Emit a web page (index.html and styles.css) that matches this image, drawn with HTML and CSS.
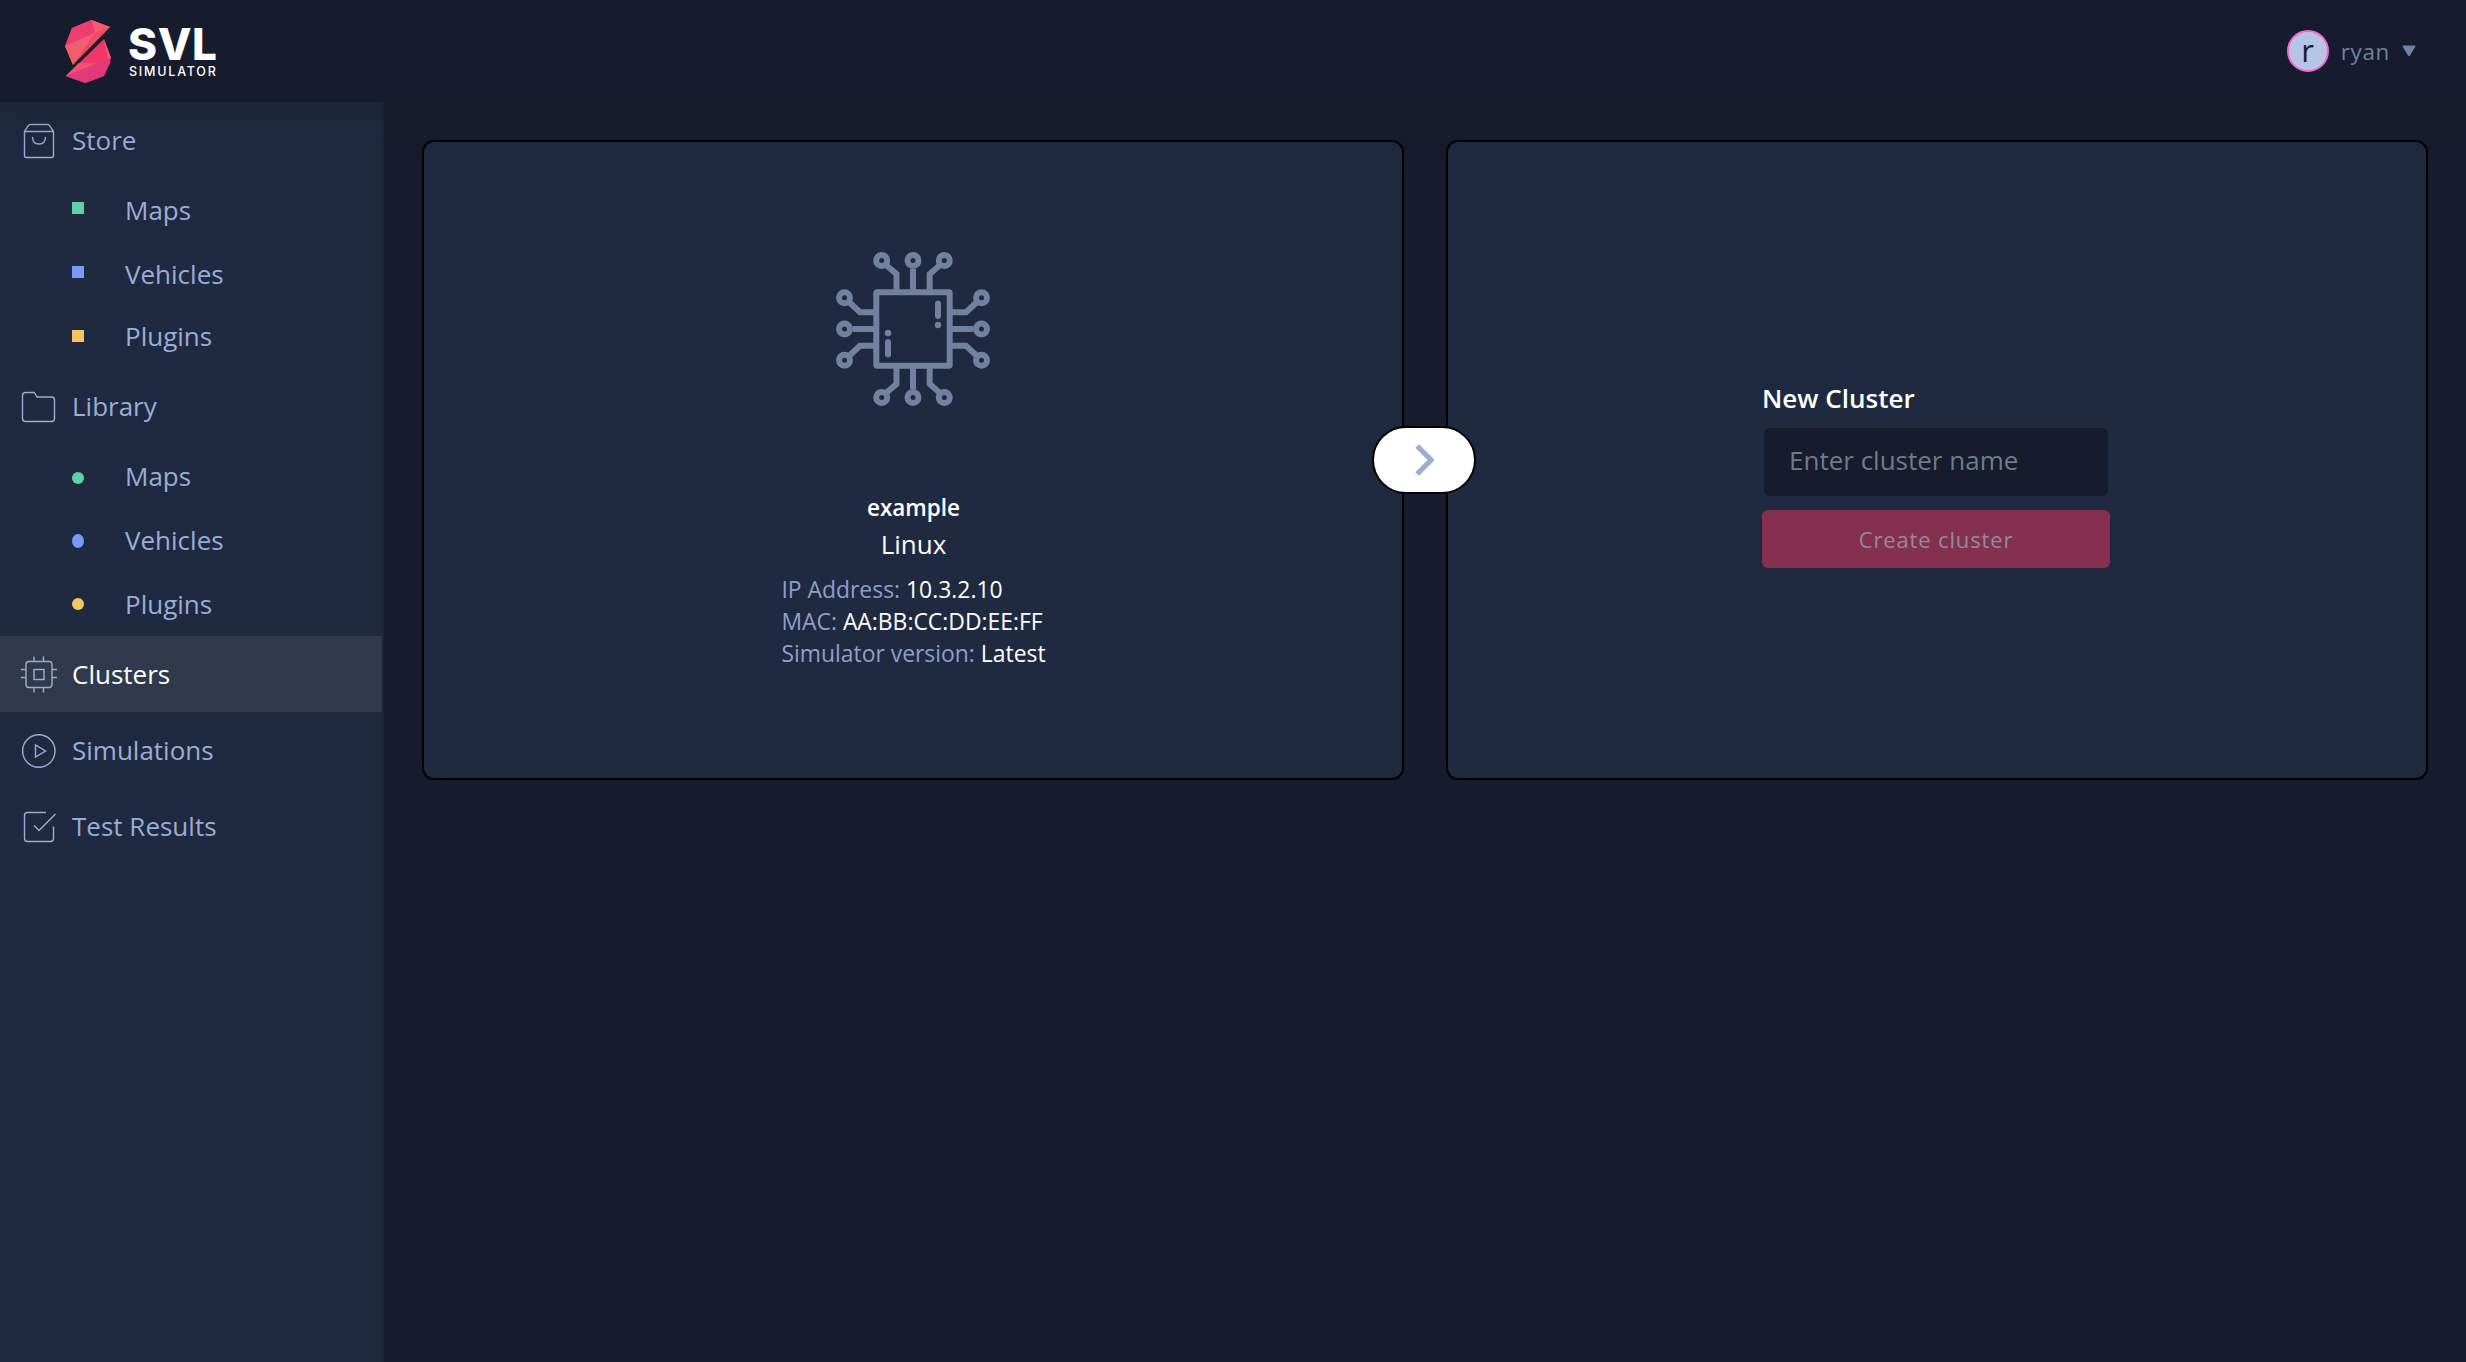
FILE: index.html
```html
<!DOCTYPE html>
<html lang="en">
<head>
<meta charset="utf-8">
<title>Clusters - SVL Simulator</title>
<link rel="stylesheet" href="styles.css">
</head>
<body>
<header class="topbar">
  <a class="brand">
    <svg class="brand-mark" width="48" height="66" viewBox="0 0 48 66">
      <path fill="#f0466c" d="M27.500 1 46 8 9 46 1 27 8 9Z"/>
      <path fill="#f45d6b" d="M27.500 1 46 8 31 14Z"/>
      <path fill="#ee3e6f" d="M27.500 1 31 14 2 26 8 9Z"/>
      <path fill="#f15e6c" d="M1 27 31 14 9 46Z"/>
      <path fill="#f04a6c" d="M31 14 46 8 22 32Z"/>
      <path fill="#ef3866" d="M40 20 47 39 40 57 21 64 2 57Z"/>
      <path fill="#f05a70" d="M40 20 47 39 44 40Z"/>
      <path fill="#e2397b" d="M15 44 47 42 40 57 21 64 2 57Z"/>
      <path fill="#f15668" d="M15 44 33 44 2 57Z"/>
    </svg>
    <span class="brand-words"><span class="brand-name">SVL</span><span class="brand-sub">SIMULATOR</span></span>
  </a>
  <div class="user">
    <span class="avatar">r</span>
    <span class="user-name">ryan</span>
    <svg class="caret" width="14" height="12" viewBox="0 0 14 12"><path fill="#7183a3" d="M1.500 .5h11q1.500 0 .8 1.300L8 10.500q-1 1.300-2 0L.7 1.800Q0 .5 1.500.5Z"/></svg>
  </div>
</header>
<div class="shell">
  <nav class="sidebar">
    <a class="nav-item">
      <svg class="icon" width="38" height="38" viewBox="0 0 38 38"><path d="M5.500 10.500V34.500q0 2 2 2h25q2 0 2-2V10.500ZM5.500 10.500 9.500 4.500q.6-1 2-1h17q1.400 0 2 1l4 6M13.500 16q0 7 6.500 7T26.500 16"/></svg>
      <span>Store</span>
    </a>
    <a class="nav-sub"><i class="mark up green"></i><span>Maps</span></a>
    <a class="nav-sub"><i class="mark up blue"></i><span>Vehicles</span></a>
    <a class="nav-sub last"><i class="mark yellow"></i><span>Plugins</span></a>
    <a class="nav-item">
      <svg class="icon" width="38" height="38" viewBox="0 0 38 38"><path d="M3.500 8.500q0-3 3-3h8q1 0 1.500 1l2 3.500h14.500q3 0 3 3V31.500q0 3-3 3h-26q-3 0-3-3Z"/></svg>
      <span>Library</span>
    </a>
    <a class="nav-sub"><i class="mark dot down green"></i><span>Maps</span></a>
    <a class="nav-sub"><i class="mark dot tall blue"></i><span>Vehicles</span></a>
    <a class="nav-sub"><i class="mark dot yellow"></i><span>Plugins</span></a>
    <a class="nav-item active">
      <svg class="icon" width="38" height="38" viewBox="0 0 38 38"><rect x="7" y="6.500" width="26" height="26" rx="3"/><rect x="15" y="14.500" width="10" height="10"/><path d="M15 1.500v5M24.500 1.500v5M15 32.500v5M24.500 32.500v5M2 14.500h5M2 22.500h5M33 14.500H38M33 22.500H38"/></svg>
      <span>Clusters</span>
    </a>
    <a class="nav-item">
      <svg class="icon" width="38" height="38" viewBox="0 0 38 38"><circle cx="19.800" cy="20" r="16.200"/><path d="M16.500 14v12l10-6Z"/></svg>
      <span>Simulations</span>
    </a>
    <a class="nav-item">
      <svg class="icon" width="38" height="38" viewBox="0 0 38 38"><path d="M27 5.500H8.500q-3 0-3 3V31.500q0 3 3 3h23q3 0 3-3V19.500M15 18.500l5 5L36.500 7"/></svg>
      <span>Test Results</span>
    </a>
  </nav>
  <main class="content">
    <section class="card">
      <svg class="chip" width="154" height="154" viewBox="0 0 154 154">
        <g fill="none" stroke="#71819f" stroke-width="6">
          <rect x="40.300" y="40.300" width="73.400" height="73.400" rx="1"/>
          <path d="M77 17V38M77 116V137M17 77H38M116 77H137M50 13 60.500 22V38M104 13 93.700 22V38M50 141 60.500 132V116M104 141 93.700 132V116"/>
          <path d="M13 50 24 60.300H38M141 50 130 60.300H116M13 104 24 93.700H38M141 104 130 93.700H116"/>
        </g>
        <g fill="#1f2940" stroke="#71819f" stroke-width="6">
          <circle cx="45.700" cy="8.500" r="5.500"/><circle cx="77" cy="8.500" r="5.500"/><circle cx="108.300" cy="8.500" r="5.500"/>
          <circle cx="45.700" cy="145.500" r="5.500"/><circle cx="77" cy="145.500" r="5.500"/><circle cx="108.300" cy="145.500" r="5.500"/>
          <circle cx="8.500" cy="45.700" r="5.500"/><circle cx="8.500" cy="77" r="5.500"/><circle cx="8.500" cy="108.300" r="5.500"/>
          <circle cx="145.500" cy="45.700" r="5.500"/><circle cx="145.500" cy="77" r="5.500"/><circle cx="145.500" cy="108.300" r="5.500"/>
        </g>
        <g fill="#71819f"><rect x="99" y="48.500" width="6" height="18.500" rx="3"/><circle cx="102" cy="73" r="3.200"/><circle cx="52" cy="81" r="3.200"/><rect x="49" y="87" width="6" height="18.500" rx="3"/></g>
      </svg>
      <h2 class="name">example</h2>
      <p class="os">Linux</p>
      <dl class="facts">
        <div><dt>IP Address:</dt> <dd>10.3.2.10</dd></div>
        <div><dt>MAC:</dt> <dd>AA:BB:CC:DD:EE:FF</dd></div>
        <div><dt>Simulator version:</dt> <dd>Latest</dd></div>
      </dl>
      <button class="next"><svg width="20" height="32" viewBox="0 0 20 32"><path fill="none" stroke="#9badd3" stroke-width="5.200" d="M3.200 2 17 16 3.200 30"/></svg></button>
    </section>
    <section class="card">
      <form class="new">
        <label class="new-title">New Cluster</label>
        <div class="field">Enter cluster name</div>
        <div class="create">Create cluster</div>
      </form>
    </section>
  </main>
</div>
</body>
</html>
```
FILE: styles.css
```css
* { box-sizing: border-box; }
body {
  margin: 0;
  height: 1362px;
  display: flex;
  flex-direction: column;
  background: #161c2d;
  color: #fff;
  font-family: "Open Sans", sans-serif;
  font-size: 26px;
}
.topbar {
  height: 102px;
  flex: none;
  display: flex;
  justify-content: space-between;
  padding: 0 50px 0 64px;
  background: #161c2d;
  box-shadow: 0 0 50px rgba(16, 34, 36, .45);
  position: relative;
  z-index: 1;
}
.brand { display: flex; padding-top: 19px; gap: 16px; }
.brand-words { display: flex; flex-direction: column; font-family: Inter, sans-serif; white-space: nowrap; padding-top: 8px; }
.brand-name { font-size: 44px; font-weight: 800; line-height: 34px; letter-spacing: .6px; }
.brand-sub { font-size: 12.5px; font-weight: 500; line-height: 16px; letter-spacing: 1.8px; margin-top: 3px; padding-left: 1px; }
.user { display: flex; align-items: center; height: 102px; color: #71819f; }
.avatar {
  width: 42px; height: 42px;
  border: 2px solid #f668c8;
  border-radius: 50%;
  background: #b6c5e5;
  color: #161b2c;
  font-size: 31px;
  line-height: 37px;
  text-align: center;
}
.user-name { margin-left: 12px; font-size: 22.4px; letter-spacing: .7px; }
.caret { margin-left: 12px; }
.shell { flex: 1; display: flex; }
.sidebar {
  width: 384px;
  flex: none;
  border-right: 2px solid #1b2536;
  background: #1f2940;
  color: #9badd6;
}
.nav-item { display: flex; align-items: center; height: 76px; padding-left: 19px; gap: 15px; }
.nav-item.active { background: #303a4c; color: #fff; }
.icon { fill: none; stroke: #9badd6; stroke-width: 1.4; }
.nav-sub { display: flex; align-items: center; height: 64px; padding-left: 72px; gap: 41px; }
.nav-sub.last { height: 62px; padding-bottom: 2px; }
.mark { width: 12px; height: 12px; }
.up { margin-bottom: 4px; }
.down { margin-top: 4px; }
.dot { border-radius: 50%; }
.tall { height: 14px; margin-top: 2px; }
.green { background: #5fd0aa; }
.blue { background: #769bff; }
.yellow { background: #f2c665; }
.content { flex: 1; display: flex; gap: 42px; align-items: flex-start; padding: 38px; }
.card {
  flex: 1;
  height: 640px;
  position: relative;
  display: flex;
  flex-direction: column;
  align-items: center;
  border: 2px solid #000;
  border-radius: 12px;
  background: #1f2940;
}
.chip { margin-top: 110px; }
.name { margin: 86px 0 0; padding-left: 1px; font-size: 22.5px; font-weight: 600; line-height: 32px; }
.os { margin: 0; padding-left: 1px; font-size: 26px; line-height: 41px; }
.facts { margin: 9px 0 0; padding-left: 1px; font-size: 22.9px; line-height: 32px; }
.facts div { white-space: nowrap; }
.facts dt, .facts dd { display: inline; margin: 0; }
.facts dt { color: #8f9fca; }
.next {
  position: absolute;
  left: 948px;
  top: 284px;
  z-index: 2;
  width: 104px;
  height: 68px;
  display: grid;
  place-items: center;
  padding: 0;
  border: 2px solid #000;
  border-radius: 34px;
  background: #fff;
}
.new { margin: 236px 2px 0 0; width: 348px; }
.new-title { display: block; font-weight: 600; font-size: 26px; line-height: 40px; }
.field { margin: 10px 2px 14px; height: 68px; padding-left: 25px; border-radius: 6px; background: #161c2d; color: #737a87; line-height: 65px; }
.create { height: 58px; border-radius: 6px; background: #863050; color: #8f8c9d; font-size: 22px; line-height: 58px; letter-spacing: .85px; text-align: center; }
```
